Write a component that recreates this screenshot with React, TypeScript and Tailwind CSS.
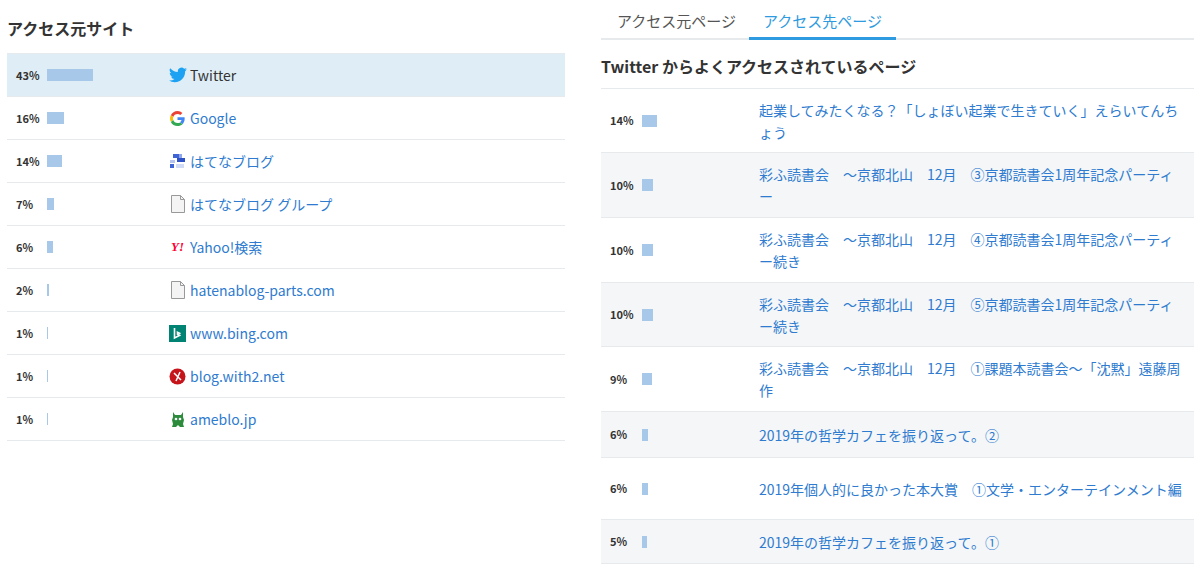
import React from 'react';

const font = { fontFamily: '"Noto Sans CJK JP", "Noto Sans", sans-serif' };

const Doc = () => (
  <svg width="16" height="18" viewBox="0 0 16 18"><path d="M1.5 0.5h9l4 4v13h-13z" fill="#f4f4f4" stroke="#999" /><path d="M10.5 0.5v4h4" fill="none" stroke="#999" /></svg>
);

const icons: Record<string, React.ReactNode> = {
  twitter: (
    <svg width="18" height="16" viewBox="0 0 24 20"><path fill="#1da1f2" d="M24 2.4a9.8 9.8 0 0 1-2.8.8A4.9 4.9 0 0 0 23.3.5a9.9 9.9 0 0 1-3.1 1.2A4.9 4.9 0 0 0 11.8 6 14 14 0 0 1 1.7.9a4.9 4.9 0 0 0 1.5 6.6A4.9 4.9 0 0 1 1 6.9v.1a4.9 4.9 0 0 0 3.9 4.8 4.9 4.9 0 0 1-2.2.1 4.9 4.9 0 0 0 4.6 3.4A9.9 9.9 0 0 1 0 17.3 14 14 0 0 0 7.5 19.5c9.1 0 14-7.5 14-14v-.6A10 10 0 0 0 24 2.4z" /></svg>
  ),
  google: (
    <svg width="15" height="15" viewBox="0 0 48 48"><path fill="#EA4335" d="M24 9.5c3.5 0 6.6 1.2 9 3.5l6.7-6.7C35.6 2.4 30.2 0 24 0 14.6 0 6.6 5.4 2.6 13.3l7.8 6C12.3 13.6 17.7 9.5 24 9.5z" /><path fill="#4285F4" d="M46.9 24.5c0-1.6-.1-3.1-.4-4.5H24v9h12.9c-.6 3-2.3 5.5-4.8 7.2l7.5 5.8c4.4-4.1 7.3-10.1 7.3-17.5z" /><path fill="#FBBC05" d="M10.4 28.7c-.5-1.5-.8-3-.8-4.7s.3-3.2.8-4.7l-7.8-6C.9 16.6 0 20.2 0 24s.9 7.4 2.6 10.7l7.8-6z" /><path fill="#34A853" d="M24 48c6.5 0 11.9-2.1 15.9-5.8l-7.5-5.8c-2.1 1.4-4.8 2.3-8.4 2.3-6.3 0-11.7-4.1-13.6-9.8l-7.8 6C6.6 42.6 14.6 48 24 48z" /></svg>
  ),
  hatena: (
    <svg width="18" height="16" viewBox="0 0 18 16"><rect x="4" y="1" width="6" height="4" fill="#3f64d6" /><rect x="10" y="1" width="3" height="4" fill="#8fa6e8" /><rect x="8" y="5" width="8" height="4" fill="#2f52c8" /><rect x="1" y="7" width="5" height="3" fill="#b5c4ef" /><rect x="1" y="11" width="4" height="4" fill="#3f64d6" /><rect x="7" y="11" width="8" height="4" fill="#d2dbf5" /></svg>
  ),
  doc: <Doc />,
  yahoo: <span className="text-[13px] font-bold italic text-[#ff0033]" style={{ fontFamily: 'Liberation Serif, serif' }}>Y!</span>,
  bing: (
    <svg width="17" height="17" viewBox="0 0 17 17"><rect width="17" height="17" fill="#008373" /><path d="M5.5 3v10l5-2.5-2-1.2 0-2 3 1.5" fill="none" stroke="#fff" strokeWidth="1.6" /></svg>
  ),
  with2: (
    <svg width="17" height="17" viewBox="0 0 17 17"><circle cx="8.5" cy="8.5" r="8" fill="#c6141b" /><path d="M5 5l7 7M11 4l-4 9" stroke="#fff" strokeWidth="1.5" /></svg>
  ),
  ameba: (
    <svg width="14" height="17" viewBox="0 0 14 17"><path d="M2 1l2 3h6l2-3v5l1 3-1 4 1 3H9l-2-2-2 2H1l1-3-1-4 1-3z" fill="#2d8c3c" /><circle cx="5" cy="8" r="1.3" fill="#fff" /><circle cx="9" cy="8" r="1.3" fill="#fff" /></svg>
  ),
};

const sites = [
  { p: 43, icon: 'twitter', name: 'Twitter', active: true },
  { p: 16, icon: 'google', name: 'Google' },
  { p: 14, icon: 'hatena', name: 'はてなブログ' },
  { p: 7, icon: 'doc', name: 'はてなブログ グループ' },
  { p: 6, icon: 'yahoo', name: 'Yahoo!検索' },
  { p: 2, icon: 'doc', name: 'hatenablog-parts.com' },
  { p: 1, icon: 'bing', name: 'www.bing.com' },
  { p: 1, icon: 'with2', name: 'blog.with2.net' },
  { p: 1, icon: 'ameba', name: 'ameblo.jp' },
];

const pages = [
  { p: 14, t: '起業してみたくなる？「しょぼい起業で生きていく」えらいてんちょう', h: 64 },
  { p: 10, t: '彩ふ読書会　～京都北山　12月　③京都読書会1周年記念パーティー', h: 65 },
  { p: 10, t: '彩ふ読書会　～京都北山　12月　④京都読書会1周年記念パーティー続き', h: 65 },
  { p: 10, t: '彩ふ読書会　～京都北山　12月　⑤京都読書会1周年記念パーティー続き', h: 64 },
  { p: 9, t: '彩ふ読書会　～京都北山　12月　①課題本読書会～「沈黙」遠藤周作', h: 65 },
  { p: 6, t: '2019年の哲学カフェを振り返って。②', h: 46 },
  { p: 6, t: '2019年個人的に良かった本大賞　①文学・エンターテインメント編', h: 62 },
  { p: 5, t: '2019年の哲学カフェを振り返って。①', h: 44 },
];

const Bar = ({ p }: { p: number }) => (
  <div className="h-[12px] bg-[#a8c8ea]" style={{ width: Math.max(1, Math.round(p * 1.07)) }} />
);

export default function App() {
  return (
    <div className="flex w-[1200px] h-[568px] bg-white overflow-hidden text-[#333]" style={font}>
      <div className="w-[558px] ml-[7px] mr-[36px]">
        <h2 className="pt-[16px] h-[53px] text-[16px] font-bold">アクセス元サイト</h2>
        <div className="border-t border-[#e6eaed]">
          {sites.map((s, i) => (
            <div key={i} className={`flex items-center h-[43px] border-b border-[#e6eaed] ${s.active ? 'bg-[#dfeef6]' : ''}`}>
              <span className="w-[40px] pl-[9px] text-[11px] font-bold">{s.p}%</span>
              <div className="w-[118px]"><Bar p={s.p} /></div>
              <span className="w-[25px] flex justify-center">{icons[s.icon]}</span>
              <span className={`text-[14px] ${s.active ? 'text-[#333]' : 'text-[#2e7bcf]'}`}>{s.name}</span>
            </div>
          ))}
        </div>
      </div>
      <div className="w-[593px]">
        <div className="flex border-b-2 border-[#e6eaed] h-[40px] pl-[3px]">
          <div className="px-[13px] pt-[10px] text-[15px] text-[#555]">アクセス元ページ</div>
          <div className="px-[14px] pt-[10px] text-[15px] text-[#2e9ae0] border-b-[3px] border-[#2e9ae0] -mb-[2px]">アクセス先ページ</div>
        </div>
        <h2 className="pt-[14px] h-[48px] text-[16px] font-bold">Twitter からよくアクセスされているページ</h2>
        <div className="border-t border-[#e6eaed]">
          {pages.map((r, i) => (
            <div key={i} className={`flex items-center border-b border-[#e6eaed] ${i % 2 ? 'bg-[#f4f6f8]' : ''}`} style={{ height: r.h }}>
              <span className="w-[41px] pl-[9px] text-[11px] font-bold">{r.p}%</span>
              <div className="w-[117px]"><Bar p={r.p} /></div>
              <span className="w-[425px] text-[14px] leading-[22px] text-[#2e7bcf]">{r.t}</span>
            </div>
          ))}
        </div>
      </div>
    </div>
  );
}
